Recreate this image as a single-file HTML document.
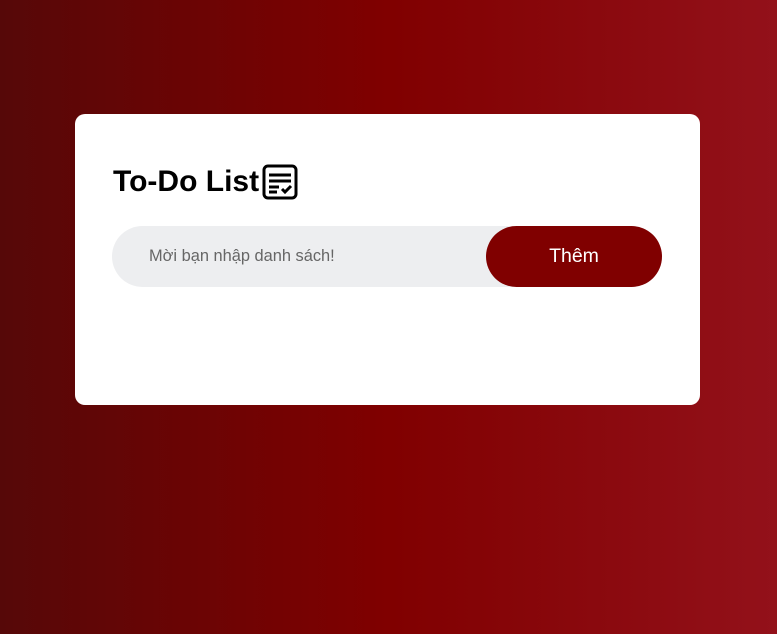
<!DOCTYPE html>
<html><head><style>
html,body{margin:0;padding:0;width:777px;height:634px;overflow:hidden}
body{background:linear-gradient(90deg,#560808 0%,#800000 50%,#93111a 100%);font-family:"Liberation Sans",sans-serif;position:relative}
.card{position:absolute;left:75px;top:114px;width:625px;height:291px;background:#fff;border-radius:10px}
h2{position:absolute;left:38px;top:49px;margin:0;font-size:30px;font-weight:bold;color:#000;line-height:38px;display:flex;align-items:center}
h2 svg{margin-left:3px}
.row{position:absolute;left:37px;top:112px;width:550px;height:61px;background:#edeef0;border-radius:31px}
.row span{position:absolute;left:37px;top:21px;font-size:16.4px;color:#666}
.btn{position:absolute;right:0;top:0;width:176px;height:61px;border-radius:31px;background:#800000;color:#fff;font-size:19.5px;text-align:center;line-height:60px}
</style></head><body>
<div class="card">
<h2>To-Do List<svg width="36" height="36" viewBox="0 0 36 36"><rect x="2" y="2" width="32" height="32" rx="4" fill="none" stroke="#000" stroke-width="3"/><path d="M7 11h22M7 17h22M7 23h10M7 28h8" stroke="#000" stroke-width="3"/><path d="M20 25l3 3 6-6" stroke="#000" stroke-width="3" fill="none"/></svg></h2>
<div class="row"><span>Mời bạn nhập danh sách!</span><div class="btn">Thêm</div></div>
</div>
</body></html>
